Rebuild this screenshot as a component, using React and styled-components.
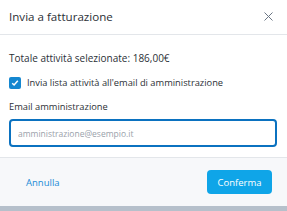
import React from 'react';
import styled, { createGlobalStyle } from 'styled-components';

const Global = createGlobalStyle`
  html, body {
    margin: 0;
    padding: 0;
    background: #b6c0cb;
    font-family: "Open Sans", "Noto Sans", sans-serif;
  }
  * { box-sizing: border-box; }
`;

const Modal = styled.div`
  width: 287px;
  height: 206px;
  background: #fff;
  display: flex;
  flex-direction: column;
`;

const Header = styled.div`
  height: 35px;
  display: flex;
  align-items: center;
  justify-content: space-between;
  padding: 0 14px 1px 9px;
  border-bottom: 1px solid #e3e6ea;
`;

const Title = styled.h2`
  margin: 0;
  font-size: 11.6px;
  font-weight: 400;
  color: #2b2f36;
`;

const Close = styled.button`
  border: 0;
  background: none;
  padding: 0;
  width: 10px;
  height: 10px;
  display: flex;
  align-items: center;
  justify-content: center;
  cursor: pointer;
`;

const Body = styled.div`
  flex: 1;
  padding: 16px 10px 0 9px;
  display: flex;
  flex-direction: column;
`;

const Total = styled.div`
  font-size: 10px;
  color: #2b2f36;
  line-height: 14px;
`;

const CheckRow = styled.label`
  margin-top: 11px;
  display: flex;
  align-items: center;
  gap: 6px;
  font-size: 9.3px;
  color: #2b2f36;
`;

const Box = styled.span`
  width: 12px;
  height: 12px;
  border-radius: 2px;
  background: #1587d0;
  display: flex;
  align-items: center;
  justify-content: center;
`;

const FieldLabel = styled.div`
  margin-top: 11px;
  font-size: 9.3px;
  color: #2b2f36;
  line-height: 14px;
`;

const Input = styled.input`
  margin-top: 5px;
  width: 100%;
  height: 28px;
  border: 2px solid #0b72c0;
  border-radius: 4px;
  padding: 0 7px;
  font-family: inherit;
  font-size: 8.5px;
  color: #2b2f36;
  outline: none;
  &::placeholder { color: #9aa1aa; }
`;

const Footer = styled.div`
  height: 49px;
  border-top: 1px solid #e3e6ea;
  background: #f7f8fa;
  display: flex;
  align-items: center;
  justify-content: space-between;
  padding: 0 15px 0 26px;
`;

const LinkButton = styled.button`
  border: 0;
  background: none;
  padding: 0;
  font-family: inherit;
  font-size: 9.5px;
  color: #1a8bd6;
  cursor: pointer;
`;

const Primary = styled.button`
  border: 0;
  border-radius: 4px;
  background: #0fa5e8;
  color: #fff;
  font-family: inherit;
  font-size: 9.5px;
  width: 65px;
  height: 24px;
  cursor: pointer;
`;

export default function App() {
  return (
    <>
      <Global />
      <Modal>
        <Header>
          <Title>Invia a fatturazione</Title>
          <Close aria-label="Chiudi">
            <svg width="9" height="9" viewBox="0 0 9 9">
              <path d="M0.5 0.5 L8.5 8.5 M8.5 0.5 L0.5 8.5" stroke="#6b7684" strokeWidth="1" />
            </svg>
          </Close>
        </Header>
        <Body>
          <Total>Totale attività selezionate: 186,00€</Total>
          <CheckRow>
            <Box>
              <svg width="8" height="8" viewBox="0 0 8 8">
                <path d="M1.2 4.2 L3.1 6 L6.8 1.8" stroke="#fff" strokeWidth="1.5" fill="none" />
              </svg>
            </Box>
            Invia lista attività all'email di amministrazione
          </CheckRow>
          <FieldLabel>Email amministrazione</FieldLabel>
          <Input placeholder="amministrazione@esempio.it" />
        </Body>
        <Footer>
          <LinkButton>Annulla</LinkButton>
          <Primary>Conferma</Primary>
        </Footer>
      </Modal>
    </>
  );
}
